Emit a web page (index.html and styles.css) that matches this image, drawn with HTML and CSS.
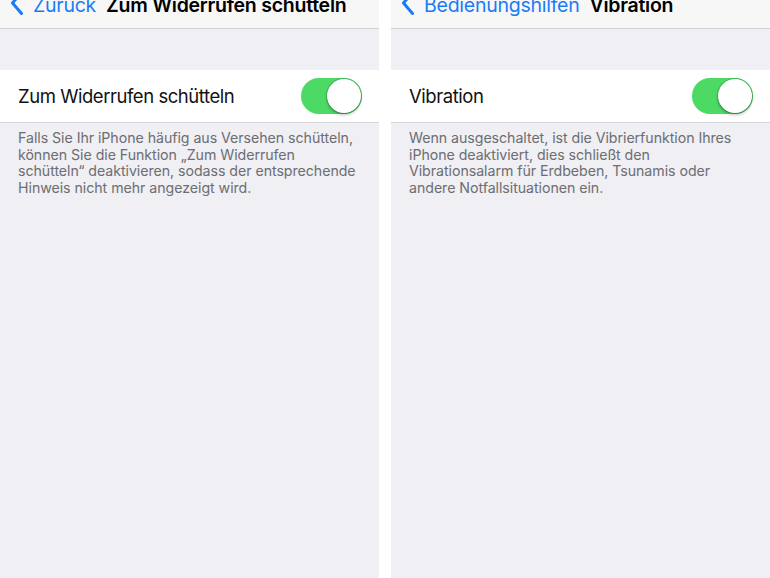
FILE: index.html
```html
<!DOCTYPE html>
<html lang="de">
<head>
<meta charset="utf-8">
<title>Einstellungen</title>
<link rel="stylesheet" href="styles.css">
</head>
<body>
<div class="screens">
  <section class="panel">
    <header class="nav">
      <span class="back">
        <svg class="chev" viewBox="0 0 14 24" width="14" height="24"><path d="M11.5 1.5 L2.5 12 L11.5 22.5" fill="none" stroke="#1a7cf4" stroke-width="3" stroke-linecap="round" stroke-linejoin="round"/></svg>
        <span class="back-label">Zurück</span>
      </span>
      <span class="title">Zum Widerrufen schütteln</span>
    </header>
    <div class="spacer"></div>
    <div class="row">
      <span class="row-label">Zum Widerrufen schütteln</span>
      <span class="switch"><span class="knob"></span></span>
    </div>
    <p class="footer">Falls Sie Ihr iPhone häufig aus Versehen schütteln, können Sie die Funktion „Zum Widerrufen schütteln“ deaktivieren, sodass der entsprechende Hinweis nicht mehr angezeigt wird.</p>
  </section>
  <section class="panel">
    <header class="nav">
      <span class="back">
        <svg class="chev" viewBox="0 0 14 24" width="14" height="24"><path d="M11.5 1.5 L2.5 12 L11.5 22.5" fill="none" stroke="#1a7cf4" stroke-width="3" stroke-linecap="round" stroke-linejoin="round"/></svg>
        <span class="back-label">Bedienungshilfen</span>
      </span>
      <span class="title">Vibration</span>
    </header>
    <div class="spacer"></div>
    <div class="row">
      <span class="row-label">Vibration</span>
      <span class="switch"><span class="knob"></span></span>
    </div>
    <p class="footer">Wenn ausgeschaltet, ist die Vibrierfunktion Ihres iPhone deaktiviert, dies schließt den Vibrationsalarm für Erdbeben, Tsunamis oder andere Notfallsituationen ein.</p>
  </section>
</div>
</body>
</html>
```
FILE: styles.css
```css
html, body {
  margin: 0;
  padding: 0;
  background: #ffffff;
  font-family: Inter, "Liberation Sans", Arial, sans-serif;
}
.screens {
  display: flex;
  gap: 12px;
  width: 770px;
  height: 578px;
  overflow: hidden;
}
.panel {
  width: 379px;
  height: 578px;
  background: #efeff4;
  display: flex;
  flex-direction: column;
}
.nav {
  height: 28px;
  background: #f7f7f8;
  border-bottom: 1px solid #cfcfd3;
  display: flex;
  align-items: flex-start;
  overflow: hidden;
  padding-left: 10px;
}
.back {
  display: flex;
  align-items: flex-start;
  color: #1a7cf4;
}
.chev {
  margin-top: -9px;
  flex: none;
}
.back-label, .title {
  font-size: 19.5px;
  letter-spacing: -0.25px;
  line-height: 20px;
  margin-top: -5px;
  white-space: nowrap;
}
.back-label {
  margin-left: 9px;
}
.title {
  margin-left: 10px;
  font-weight: 600;
  color: #000;
}
.spacer {
  height: 41px;
}
.row {
  height: 52px;
  background: #fff;
  border-bottom: 1px solid #d6d6da;
  display: flex;
  align-items: center;
  justify-content: space-between;
  padding: 0 17px 0 18px;
}
.row-label {
  font-size: 18.5px;
  letter-spacing: -0.45px;
  color: #111;
}
.switch {
  width: 61px;
  height: 36px;
  border-radius: 18px;
  background: #4cd964;
  display: flex;
  justify-content: flex-end;
  align-items: center;
  padding: 0 1px;
  box-sizing: border-box;
}
.knob {
  width: 34px;
  height: 34px;
  border-radius: 50%;
  background: #fff;
  box-shadow: 0 2px 3px rgba(0,0,0,0.25), 0 0 0 1px rgba(40,120,60,0.35);
}
.footer {
  margin: 7px 0 0 18px;
  width: 344px;
  font-size: 14.2px;
  letter-spacing: -0.05px;
  line-height: 16.7px;
  color: #6d6d72;
}
```
